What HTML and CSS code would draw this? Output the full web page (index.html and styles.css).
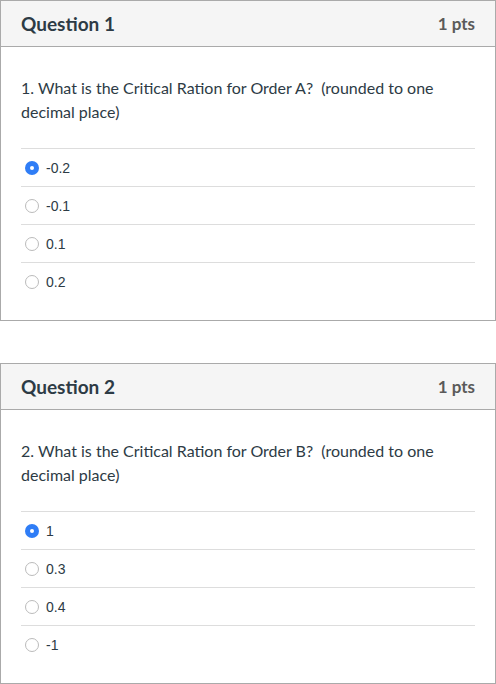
FILE: index.html
```html
<!DOCTYPE html>
<html>
<head>
<meta charset="utf-8">
<link rel="stylesheet" href="styles.css">
</head>
<body>
<div class="quiz">
  <div class="card">
    <div class="card-header">
      <span class="title">Question 1</span>
      <span class="pts">1 pts</span>
    </div>
    <div class="card-body">
      <p class="question">1. What is the Critical Ration for Order A?&nbsp; (rounded to one decimal place)</p>
      <div class="answers">
        <div class="answer"><span class="radio checked"></span><span class="label">-0.2</span></div>
        <div class="answer"><span class="radio"></span><span class="label">-0.1</span></div>
        <div class="answer"><span class="radio"></span><span class="label">0.1</span></div>
        <div class="answer"><span class="radio"></span><span class="label">0.2</span></div>
      </div>
    </div>
  </div>
  <div class="card">
    <div class="card-header">
      <span class="title">Question 2</span>
      <span class="pts">1 pts</span>
    </div>
    <div class="card-body">
      <p class="question">2. What is the Critical Ration for Order B?&nbsp; (rounded to one decimal place)</p>
      <div class="answers">
        <div class="answer"><span class="radio checked"></span><span class="label">1</span></div>
        <div class="answer"><span class="radio"></span><span class="label">0.3</span></div>
        <div class="answer"><span class="radio"></span><span class="label">0.4</span></div>
        <div class="answer"><span class="radio"></span><span class="label">-1</span></div>
      </div>
    </div>
  </div>
</div>
</body>
</html>
```

FILE: styles.css
```css
html, body {
  margin: 0;
  padding: 0;
  background: #ffffff;
}

.quiz {
  width: 496px;
  display: flex;
  flex-direction: column;
  gap: 42px;
  font-family: Lato, "Liberation Sans", sans-serif;
  color: #2d3b45;
}

.card {
  border: 1px solid #aaaaaa;
  background: #ffffff;
}

.card-header {
  height: 45px;
  background: #f5f5f5;
  border-bottom: 1px solid #aaaaaa;
  display: flex;
  align-items: center;
  justify-content: space-between;
  padding: 0 20px;
}

.title {
  font-size: 19px;
  font-weight: 700;
  color: #2d3b45;
}

.pts {
  font-size: 17px;
  font-weight: 700;
  color: #5a5a5a;
}

.card-body {
  padding: 29px 20px 20px;
}

.question {
  margin: 0 0 24px;
  font-size: 16px;
  line-height: 24px;
}

.answers {
  display: flex;
  flex-direction: column;
}

.answer {
  height: 38px;
  box-sizing: border-box;
  border-top: 1px solid #dddddd;
  display: flex;
  align-items: center;
  padding-left: 4px;
  gap: 7px;
}

.radio {
  width: 14px;
  height: 14px;
  box-sizing: border-box;
  border-radius: 50%;
  border: 1px solid #bbbbbb;
  background: #ffffff;
  flex: none;
  display: flex;
  align-items: center;
  justify-content: center;
}

.radio.checked {
  border: none;
  background: #2f7df6;
}

.radio.checked::after {
  content: "";
  width: 4px;
  height: 4px;
  border-radius: 50%;
  background: #ffffff;
}

.label {
  font-family: "Liberation Sans", Arial, sans-serif;
  font-size: 14px;
  color: #2d3b45;
}
```
